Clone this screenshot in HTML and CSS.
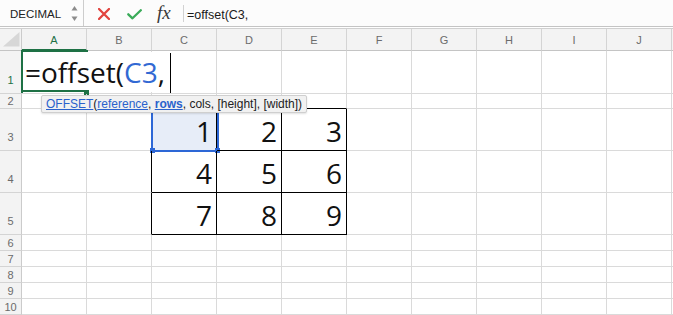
FILE: index.html
```html
<!DOCTYPE html>
<html>
<head>
<meta charset="utf-8">
<link rel="stylesheet" href="styles.css">
</head>
<body>
<div class="bar">
  <div class="namebox">
    <span class="name">DECIMAL</span>
    <svg class="spin" width="7" height="15" viewBox="0 0 7 15"><path d="M3.5 0 L6.5 4.5 L0.5 4.5 Z" fill="#8c8c8c"/><path d="M3.5 15 L6.5 10.5 L0.5 10.5 Z" fill="#8c8c8c"/></svg>
  </div>
  <svg class="icon-x" width="12" height="12" viewBox="0 0 12 12"><path d="M1 1 L11 11 M11 1 L1 11" stroke="#e2443f" stroke-width="2.3" stroke-linecap="round"/></svg>
  <svg class="icon-ok" width="15" height="11" viewBox="0 0 15 11"><path d="M1.3 5.3 L5.5 9.3 L13.8 1.2" fill="none" stroke="#3aab59" stroke-width="2.3" stroke-linecap="round" stroke-linejoin="round"/></svg>
  <span class="fx">fx</span>
  <span class="sep"></span>
  <span class="formula">=offset(C3,</span>
</div>

<div class="sheet">
  <div class="corner"><svg width="22" height="21" viewBox="0 0 22 21"><path d="M3 17.5 L19.5 17.5 L19.5 3 Z" fill="#d7d7d7"/></svg></div>
  <div class="colh sel">A</div>
  <div class="colh">B</div>
  <div class="colh">C</div>
  <div class="colh">D</div>
  <div class="colh">E</div>
  <div class="colh">F</div>
  <div class="colh">G</div>
  <div class="colh">H</div>
  <div class="colh">I</div>
  <div class="colh">J</div>
  <div class="colh fill"></div>

  <!-- row 1 -->
  <div class="rowh tall sel">1</div>
  <div class="c a1">
    <div class="editor"><span class="etext">=offset(<span class="ref">C3</span>,</span></div>
    <div class="caret"></div>
    <div class="frame"><span class="fhandle"></span></div>
  </div>
  <div class="c"></div><div class="c"></div><div class="c"></div><div class="c"></div><div class="c"></div><div class="c"></div><div class="c"></div><div class="c"></div><div class="c"></div><div class="c fill"></div>

  <!-- row 2 -->
  <div class="rowh">2</div>
  <div class="c a2">
    <div class="tip"><a class="lnk">OFFSET</a>(<a class="lnk">reference</a>, <a class="lnk cur">rows</a>, cols, [height], [width])</div>
  </div>
  <div class="c"></div>
  <div class="c bb"></div><div class="c bb"></div><div class="c bb"></div>
  <div class="c"></div><div class="c"></div><div class="c"></div><div class="c"></div><div class="c"></div><div class="c fill"></div>

  <!-- row 3 -->
  <div class="rowh tall">3</div>
  <div class="c"></div>
  <div class="c br"></div>
  <div class="c num box active">1
    <div class="selbox"></div>
    <span class="h h-tl"></span><span class="h h-tr"></span><span class="h h-bl"></span><span class="h h-br"></span>
  </div>
  <div class="c num box">2</div>
  <div class="c num box">3</div>
  <div class="c"></div><div class="c"></div><div class="c"></div><div class="c"></div><div class="c"></div><div class="c fill"></div>

  <!-- row 4 -->
  <div class="rowh tall">4</div>
  <div class="c"></div>
  <div class="c br"></div>
  <div class="c num box">4</div>
  <div class="c num box">5</div>
  <div class="c num box">6</div>
  <div class="c"></div><div class="c"></div><div class="c"></div><div class="c"></div><div class="c"></div><div class="c fill"></div>

  <!-- row 5 -->
  <div class="rowh tall">5</div>
  <div class="c"></div>
  <div class="c br"></div>
  <div class="c num box">7</div>
  <div class="c num box">8</div>
  <div class="c num box">9</div>
  <div class="c"></div><div class="c"></div><div class="c"></div><div class="c"></div><div class="c"></div><div class="c fill"></div>

  <div class="rowh">6</div>
  <div class="c"></div><div class="c"></div><div class="c"></div><div class="c"></div><div class="c"></div><div class="c"></div><div class="c"></div><div class="c"></div><div class="c"></div><div class="c"></div><div class="c fill"></div>
  <div class="rowh">7</div>
  <div class="c"></div><div class="c"></div><div class="c"></div><div class="c"></div><div class="c"></div><div class="c"></div><div class="c"></div><div class="c"></div><div class="c"></div><div class="c"></div><div class="c fill"></div>
  <div class="rowh">8</div>
  <div class="c"></div><div class="c"></div><div class="c"></div><div class="c"></div><div class="c"></div><div class="c"></div><div class="c"></div><div class="c"></div><div class="c"></div><div class="c"></div><div class="c fill"></div>
  <div class="rowh">9</div>
  <div class="c"></div><div class="c"></div><div class="c"></div><div class="c"></div><div class="c"></div><div class="c"></div><div class="c"></div><div class="c"></div><div class="c"></div><div class="c"></div><div class="c fill"></div>
  <div class="rowh">10</div>
  <div class="c"></div><div class="c"></div><div class="c"></div><div class="c"></div><div class="c"></div><div class="c"></div><div class="c"></div><div class="c"></div><div class="c"></div><div class="c"></div><div class="c fill"></div>
</div>
</body>
</html>
```

FILE: styles.css
```css
* { box-sizing: border-box; }
html, body {
  margin: 0;
  padding: 0;
  background: #ffffff;
  width: 673px;
  height: 315px;
  overflow: hidden;
  font-family: "Liberation Sans", Arial, sans-serif;
}

/* formula bar */
.bar {
  display: flex;
  align-items: center;
  height: 27px;
  border-bottom: 1px solid #c4c4c4;
  background: #fcfcfc;
}
.namebox {
  display: flex;
  align-items: center;
  justify-content: space-between;
  width: 84px;
  height: 26px;
  padding: 2px 5px 0 10px;
  border-right: 1px solid #cdcdcd;
}
.name {
  font-size: 11.5px;
  color: #222;
}
.spin { display: block; margin-top: -1px; }
.icon-x { display: block; margin-left: 14px; margin-top: 1px; }
.icon-ok { display: block; margin-left: 17px; margin-top: 2px; }
.fx {
  display: inline-block;
  width: 16px;
  margin-left: 15px;
  font-family: "Liberation Serif", "Times New Roman", serif;
  font-style: italic;
  font-size: 19px;
  color: #3a3a3a;
  line-height: 20px;
}
.sep {
  display: block;
  width: 1px;
  height: 17px;
  margin-left: 10px;
  background: #d2d2d2;
}
.formula {
  margin-left: 3px;
  padding-top: 3px;
  font-size: 12.5px;
  color: #1a1a1a;
}

/* sheet */
.sheet {
  display: grid;
  margin-top: 1px;
  border-top: 1px solid #d0d0d0;
  grid-template-columns: 22px repeat(10, 65px) 1fr;
  grid-template-rows: 22px 43px 15px 42px 42px 42px 16px 16px 16px 16px 16px;
}
.corner {
  background: #f3f3f3;
  border-right: 1px solid #cbcbcb;
  border-bottom: 1px solid #c4c4c4;
}
.corner svg { display: block; }
.colh {
  display: flex;
  align-items: center;
  justify-content: center;
  padding-top: 1px;
  background: #f3f3f3;
  border-right: 1px solid #d4d4d4;
  border-bottom: 1px solid #c4c4c4;
  font-size: 11px;
  color: #6b6b6b;
}
.colh.sel {
  color: #1e7145;
  border-bottom: 2px solid #1e7145;
  padding-top: 2px;
}
.colh.fill { border-right: none; }
.rowh {
  display: flex;
  align-items: center;
  justify-content: center;
  background: #f3f3f3;
  border-right: 1px solid #cbcbcb;
  border-bottom: 1px solid #d4d4d4;
  font-size: 11px;
  line-height: 12px;
  color: #6b6b6b;
}
.rowh.tall {
  align-items: flex-end;
  padding-bottom: 7px;
}
.rowh.sel { color: #1e7145; }

.c {
  position: relative;
  border-right: 1px solid #dadada;
  border-bottom: 1px solid #dadada;
}
.c.fill { border-right: none; }
.c.bb { border-bottom-color: #000; }
.c.br { border-right-color: #000; }
.c.box {
  border-right-color: #000;
  border-bottom-color: #000;
}
.num {
  display: flex;
  align-items: flex-end;
  justify-content: flex-end;
  padding: 0 4px 5px 0;
  font-family: "Open Sans", "Liberation Sans", sans-serif;
  font-size: 28px;
  line-height: 28px;
  color: #111;
}
.active { background: #e7edf8; }
.selbox {
  position: absolute;
  left: -1px;
  top: -2px;
  width: 68px;
  height: 45px;
  border: 2px solid #2d67d6;
}
.h {
  position: absolute;
  width: 5px;
  height: 5px;
  background: #2d67d6;
}
.h-tl { left: -2px; top: -4px; }
.h-tr { left: 63px; top: -4px; }
.h-bl { left: -2px; top: 39px; }
.h-br { left: 63px; top: 39px; }

/* editing cell A1 */
.a1 { z-index: 2; }
.editor {
  position: absolute;
  left: 1px;
  top: 1px;
  width: 150px;
  height: 40px;
  display: flex;
  align-items: flex-end;
  padding: 0 0 6px 2px;
  background: #fff;
  font-family: "Open Sans", "Liberation Sans", sans-serif;
  font-size: 28px;
  line-height: 28px;
  color: #111;
  white-space: nowrap;
}
.ref { color: #3269d3; }
.caret {
  position: absolute;
  left: 148px;
  top: 2px;
  width: 1px;
  height: 40px;
  background: #000;
}
.frame {
  position: absolute;
  left: -1px;
  top: -1px;
  width: 67px;
  height: 43px;
  border-top: 2px solid #1e7145;
  border-left: 2px solid #1e7145;
}
.frame::after {
  content: "";
  position: absolute;
  left: -2px;
  bottom: 1px;
  width: 63px;
  height: 2px;
  background: #1e7145;
}
.fhandle {
  position: absolute;
  left: 61px;
  top: 38px;
  width: 5px;
  height: 5px;
  background: #1e7145;
  z-index: 1;
}

/* tooltip */
.a2 { z-index: 5; }
.tip {
  position: absolute;
  left: 19px;
  top: 1px;
  height: 18px;
  padding: 0 4px;
  background: #f1f1f1;
  border: 1px solid #cfcfcf;
  border-radius: 2px;
  box-shadow: 0 1px 2px rgba(0,0,0,0.12);
  font-size: 12px;
  line-height: 16px;
  color: #222;
  white-space: nowrap;
}
.lnk {
  color: #2a62cc;
  text-decoration: underline;
}
.lnk.cur { font-weight: bold; }
```
